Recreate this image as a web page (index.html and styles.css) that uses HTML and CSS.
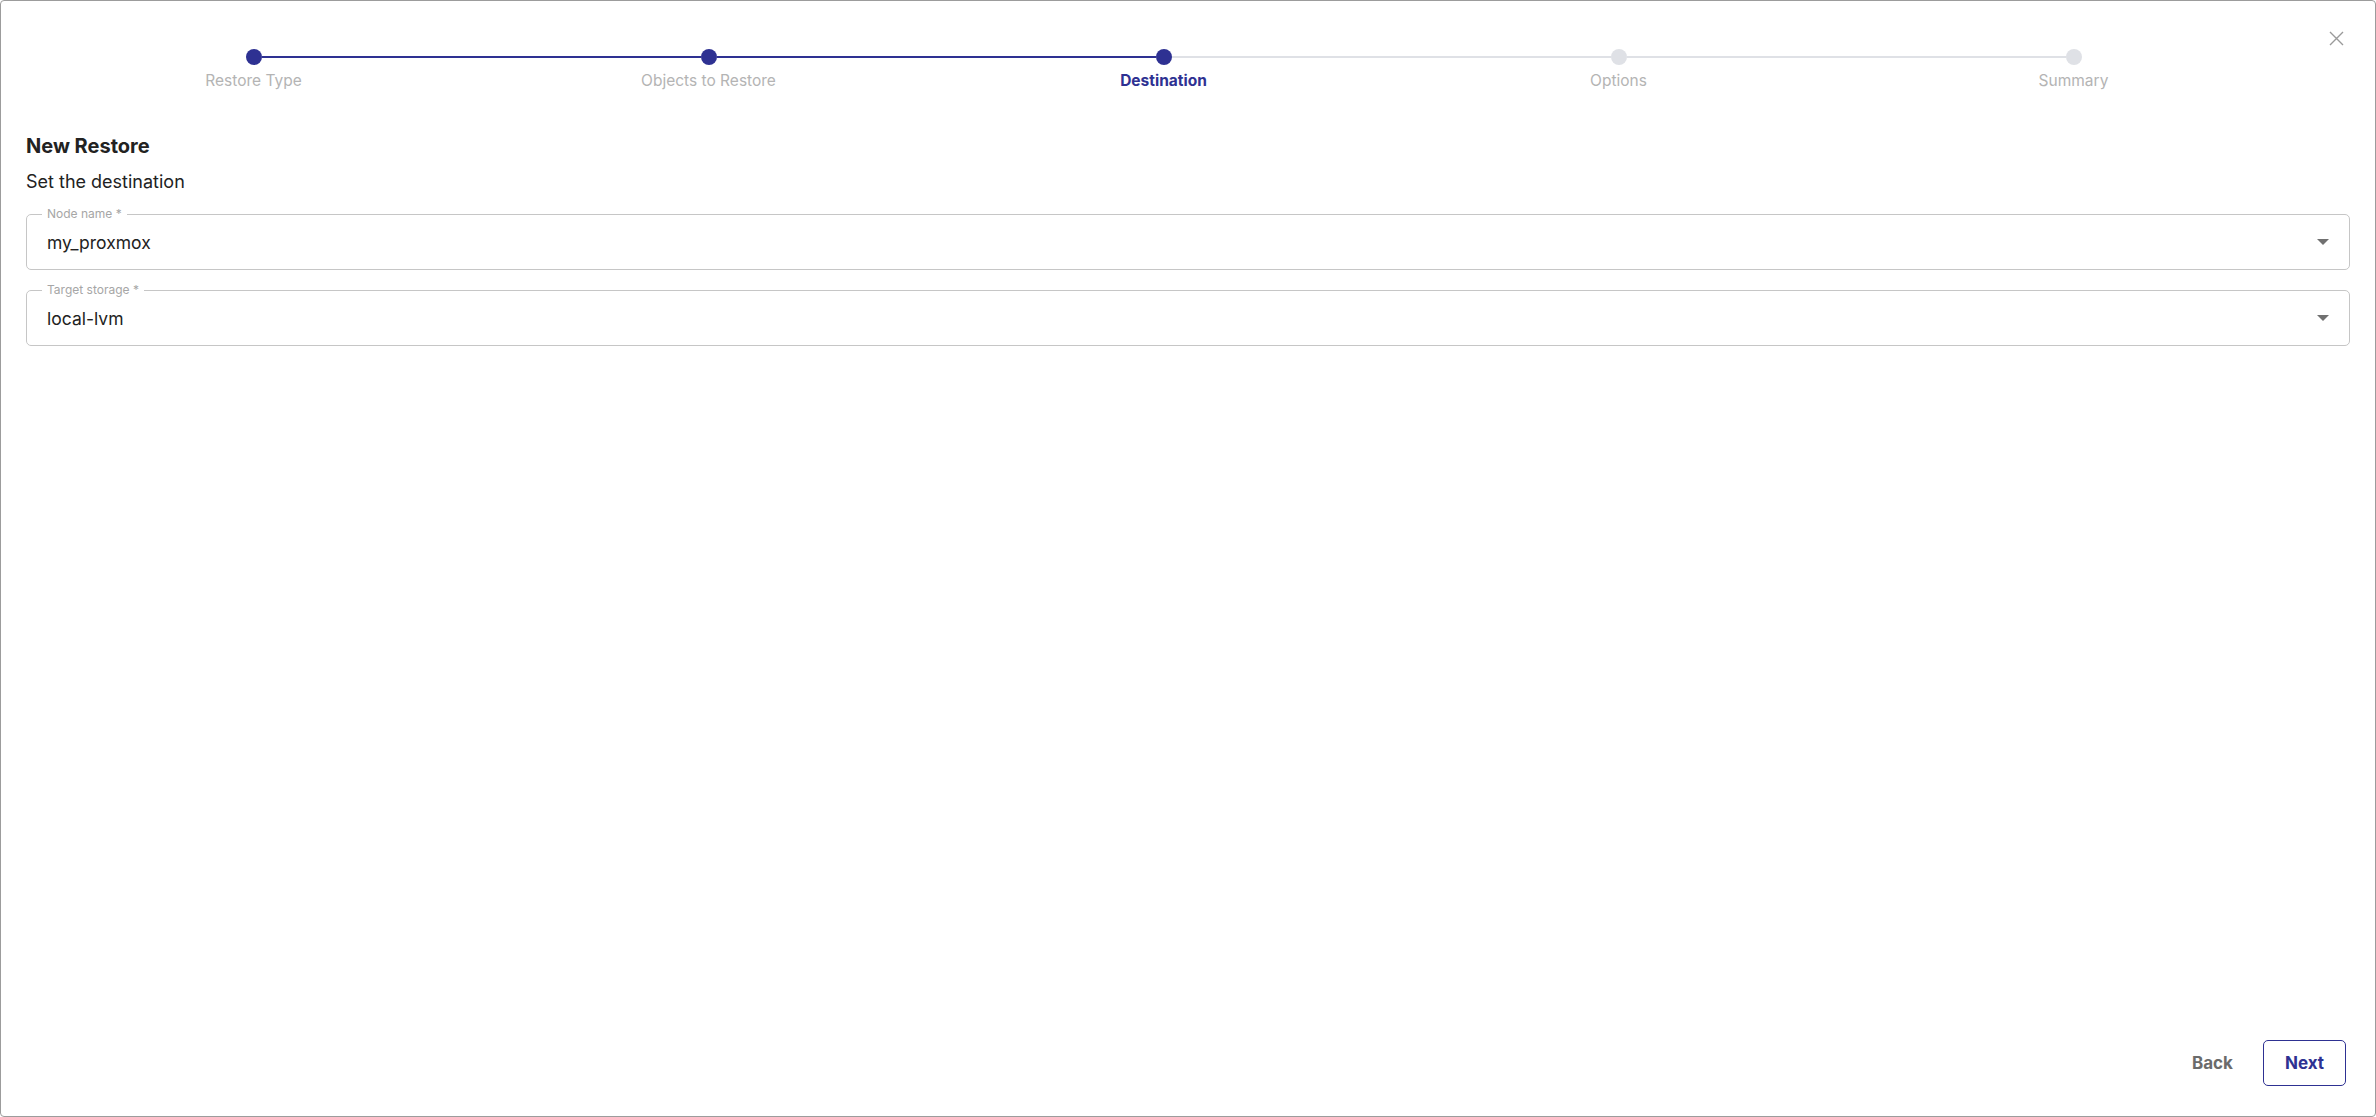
FILE: index.html
```html
<!DOCTYPE html>
<html lang="en">
<head>
<meta charset="utf-8">
<title>New Restore</title>
<link rel="stylesheet" href="styles.css">
</head>
<body>
<div class="dialog">
  <header class="header">
    <ol class="stepper">
      <li class="step done">
        <div class="track"><span class="half none"></span><span class="dot"></span><span class="half on"></span></div>
        <span class="step-label">Restore Type</span>
      </li>
      <li class="step done">
        <div class="track"><span class="half on"></span><span class="dot"></span><span class="half on"></span></div>
        <span class="step-label">Objects to Restore</span>
      </li>
      <li class="step active">
        <div class="track"><span class="half on"></span><span class="dot"></span><span class="half off"></span></div>
        <span class="step-label">Destination</span>
      </li>
      <li class="step">
        <div class="track"><span class="half off"></span><span class="dot"></span><span class="half off"></span></div>
        <span class="step-label">Options</span>
      </li>
      <li class="step">
        <div class="track"><span class="half off"></span><span class="dot"></span><span class="half none"></span></div>
        <span class="step-label">Summary</span>
      </li>
    </ol>
    <button class="close" type="button" aria-label="Close">
      <svg width="15" height="15" viewBox="0 0 15 15"><path d="M1 1L14 14M14 1L1 14" stroke="#9a9a9a" stroke-width="1.4" fill="none"/></svg>
    </button>
  </header>

  <main class="content">
    <h1 class="title">New Restore</h1>
    <p class="subtitle">Set the destination</p>

    <fieldset class="field">
      <legend class="field-label">Node name *</legend>
      <div class="field-row">
        <span class="field-value">my_proxmox</span>
        <svg class="caret" width="12" height="6" viewBox="0 0 12 6"><path d="M0 0L12 0L6 6Z" fill="#707070"/></svg>
      </div>
    </fieldset>

    <fieldset class="field">
      <legend class="field-label">Target storage *</legend>
      <div class="field-row">
        <span class="field-value">local-lvm</span>
        <svg class="caret" width="12" height="6" viewBox="0 0 12 6"><path d="M0 0L12 0L6 6Z" fill="#707070"/></svg>
      </div>
    </fieldset>
  </main>

  <footer class="footer">
    <button class="btn btn-back" type="button">Back</button>
    <button class="btn btn-next" type="button">Next</button>
  </footer>
</div>
</body>
</html>
```

FILE: styles.css
```css
* {
  box-sizing: border-box;
}

html, body {
  margin: 0;
  padding: 0;
  background: #ffffff;
}

body {
  font-family: "Inter", "Noto Sans", sans-serif;
  color: #222222;
}

.dialog {
  height: 100vh;
  border: 1px solid #9c9c9c;
  border-radius: 4px;
  display: flex;
  flex-direction: column;
  background: #ffffff;
}

/* header / stepper */
.header {
  display: flex;
  align-items: flex-start;
  padding: 0 19px 0 25px;
}

.stepper {
  list-style: none;
  margin: 0;
  padding: 48px 0 0 0;
  width: 2275px;
  display: grid;
  grid-template-columns: repeat(5, 1fr);
}

.step {
  display: flex;
  flex-direction: column;
  align-items: center;
}

.track {
  width: 100%;
  height: 16px;
  display: flex;
  align-items: center;
}

.half {
  flex: 1;
  height: 2px;
}

.half.on {
  background: #2e3192;
}

.half.off {
  background: #dfe1e6;
}

.half.none {
  background: transparent;
}

.dot {
  width: 16px;
  height: 16px;
  border-radius: 50%;
  background: #dfe1e6;
  flex: 0 0 16px;
}

.step.done .dot,
.step.active .dot {
  background: #2e3192;
}

.step-label {
  margin-top: 6px;
  font-size: 15.5px;
  line-height: 20px;
  color: #b4b4b4;
}

.step.active .step-label {
  color: #2e3192;
  font-weight: 700;
}

.close {
  margin-left: auto;
  margin-top: 17px;
  width: 40px;
  height: 40px;
  border: none;
  background: transparent;
  padding: 0;
  display: flex;
  align-items: center;
  justify-content: center;
}

/* content */
.content {
  padding: 0 25px;
  display: flex;
  flex-direction: column;
}

.title {
  margin: 41px 0 0 0;
  font-size: 20px;
  line-height: 28px;
  font-weight: 700;
  color: #222222;
}

.subtitle {
  margin: 10px 0 13px 0;
  font-size: 18px;
  line-height: 24px;
  color: #222222;
}

.field {
  margin: 0 0 13px 0;
  border: 1px solid #c6c6c6;
  border-radius: 5px;
  padding: 0 20px 0 15px;
  min-width: 0;
}

.field-label {
  padding: 0 5px;
  font-size: 12px;
  line-height: 14px;
  color: #a6a6a6;
}

.field-row {
  height: 42px;
  margin-bottom: 6px;
  display: flex;
  align-items: center;
  justify-content: space-between;
  padding-left: 5px;
}

.field-value {
  font-size: 17.5px;
  color: #222222;
}

/* footer */
.footer {
  margin-top: auto;
  display: flex;
  justify-content: flex-end;
  gap: 8px;
  padding: 0 29px 30px 0;
}

.btn {
  height: 46px;
  padding: 0 21px;
  border: 1px solid transparent;
  border-radius: 5px;
  background: transparent;
  font-family: "Inter", "Noto Sans", sans-serif;
  font-size: 17px;
  font-weight: 700;
}

.btn-back {
  color: #6b6b6b;
}

.btn-next {
  color: #2e3192;
  border-color: #2e3192;
}
```
